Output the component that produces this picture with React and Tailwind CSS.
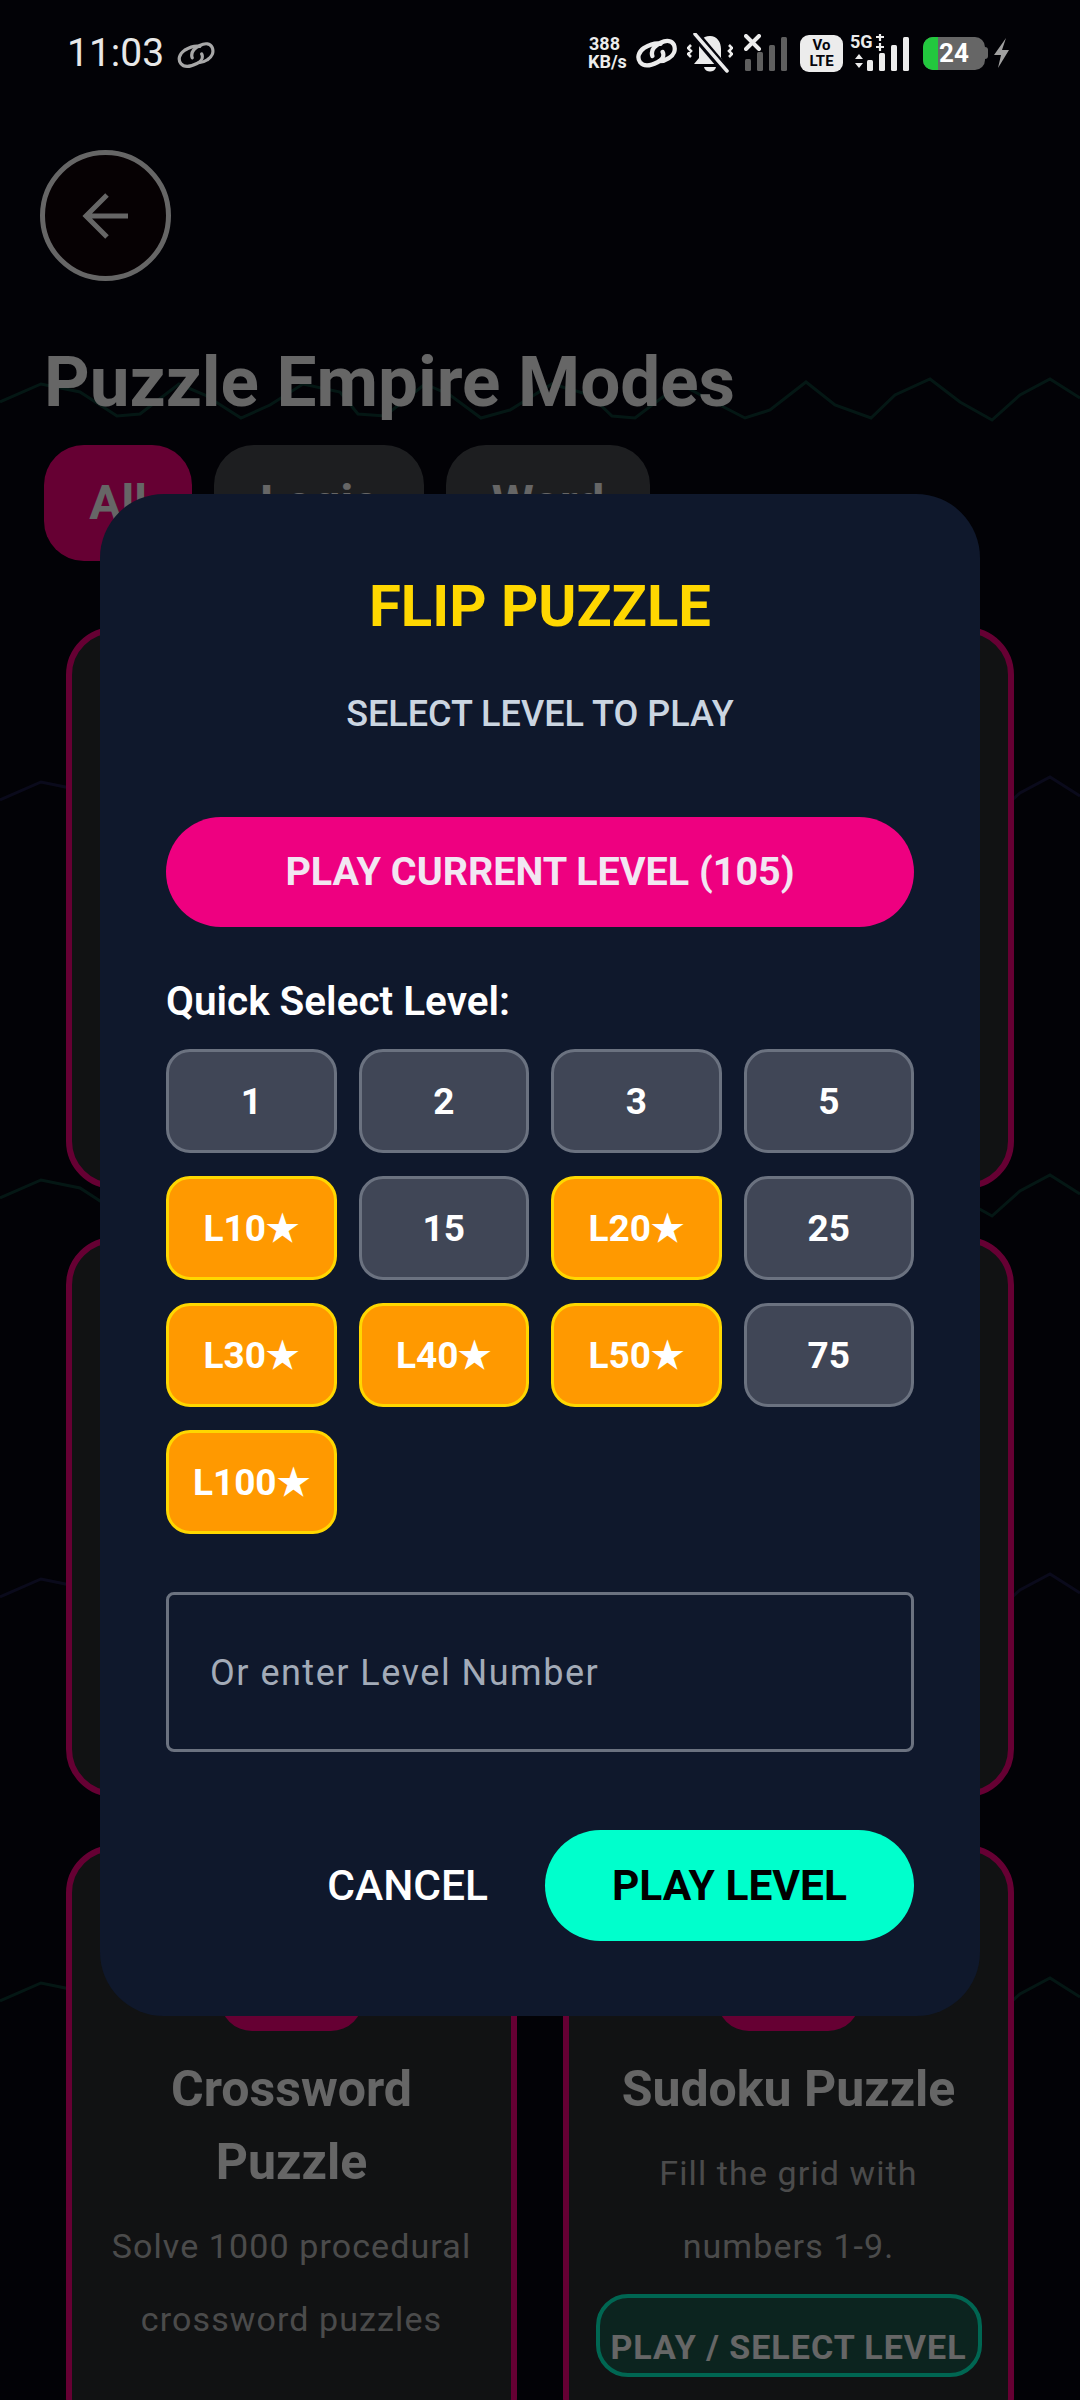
const W = "M0 402 L41 384 L80 392 L117 416 L140 414 L179 384 L205 395 L241 418 L270 405 L303 384 L340 392 L358 414 L385 416 L425 384 L450 395 L481 418 L510 410 L552 384 L590 395 L612 416 L635 418 L680 384 L710 400 L745 418 L770 410 L806 382 L835 405 L871 418 L895 395 L930 379 L960 402 L992 420 L1020 395 L1050 379 L1080 398";

function Waves() {
  const rows = [
    [0, "#0c3a34"],
    [398, "#1a1a44"],
    [796, "#0c3a34"],
    [1195, "#1a1a44"],
    [1599, "#0c3a34"],
  ];
  return (
    <svg className="absolute inset-0" width="1080" height="2400" fill="none">
      {rows.map(([y, c]) => (
        <path key={y} d={W} transform={`translate(0 ${y})`} stroke={c} strokeWidth="3" />
      ))}
    </svg>
  );
}

function LinkIcon({ className, w = 3 }) {
  return (
    <svg className={className} viewBox="0 0 40 30" fill="none" stroke="currentColor" strokeWidth={w} strokeLinecap="round">
      <path d="M24 6 C19 5 13 7 8 10 C2 14 1 20 4 24 C8 29 15 27 21 24 C25 22 28 18 26 14" />
      <path d="M16 18 C14 12 18 8 24 5 C30 2 35 3 37 7 C39 12 37 17 32 20 C29 22 26 23 23 23" />
    </svg>
  );
}

function StatusBar() {
  return (
    <div className="relative z-20 flex h-[106px] items-center pl-[67px] pr-[70px] text-[#ececec]">
      <span className="text-[39px] leading-none text-[#e8e8e8]">11:03</span>
      <LinkIcon className="ml-[13px] mt-[3px] h-[30px] w-[38px] text-[#a8a8a8]" w={3.4} />
      <div className="ml-auto flex items-center">
        <div className="flex w-[48px] flex-col items-start text-[18px] font-bold leading-[18px] text-[#ececec]">
          <span className="pl-[1px]">388</span>
          <span>KB/s</span>
        </div>
        <LinkIcon className="h-[32px] w-[41px]" w={4.2} />
        <svg className="ml-[10px] h-[40px] w-[46px]" viewBox="0 0 46 40" fill="none">
          <path d="M23 3 C15 3 12 9 12 16 L12 25 L7 31 L38 31 L34 25 L34 16 C34 9 30 3 23 3Z" fill="#ececec" />
          <path d="M17 34 H29 C28 40 18 40 17 34Z" fill="#ececec" />
          <path d="M7 0 L39 38" stroke="#05050c" strokeWidth="9" />
          <path d="M8 1 L40 38" stroke="#ececec" strokeWidth="3.5" strokeLinecap="round" />
          <path d="M4 12 L1 15 L4 18 L1 21 L4 24 M42 12 L45 15 L42 18 L45 21 L42 24" stroke="#ececec" strokeWidth="2.6" />
        </svg>
        <svg className="ml-[11px] h-[38px] w-[44px]" viewBox="0 0 44 38" fill="none">
          <path d="M2 2 L15 15 M15 2 L2 15" stroke="#ececec" strokeWidth="4" strokeLinecap="round" />
          <rect x="1" y="25" width="6" height="12" rx="1.5" fill="#5f5f5f" />
          <rect x="13" y="18" width="6" height="19" rx="1.5" fill="#5f5f5f" />
          <rect x="25" y="11" width="6" height="26" rx="1.5" fill="#5f5f5f" />
          <rect x="37" y="3" width="6" height="34" rx="1.5" fill="#5f5f5f" />
        </svg>
        <div className="ml-[12px] flex h-[37px] w-[43px] flex-col items-center justify-center rounded-[9px] bg-[#ececec] text-[15px] font-bold leading-[16px] text-[#05050c]">
          <span>Vo</span>
          <span>LTE</span>
        </div>
        <div className="relative ml-[7px] h-[38px] w-[62px]">
          <span className="absolute left-0 top-[-2px] text-[18px] font-bold leading-[20px]">5G</span>
          <svg className="absolute inset-0" width="62" height="38" viewBox="0 0 62 38" fill="none">
            <path d="M26 3 H34 M30 0 V7 M26 13 H34 M30 9 V17" stroke="#ececec" strokeWidth="2.2" />
            <path d="M5 25 L9 20 L13 25Z M5 29 L9 34 L13 29Z" fill="#ececec" />
            <rect x="17" y="26" width="6" height="11" rx="1.5" fill="#ececec" />
            <rect x="29" y="19" width="6" height="18" rx="1.5" fill="#ececec" />
            <rect x="41" y="11" width="6" height="26" rx="1.5" fill="#ececec" />
            <rect x="53" y="3" width="6" height="34" rx="1.5" fill="#ececec" />
          </svg>
        </div>
        <div className="relative ml-[11px] h-[33px] w-[62px] overflow-hidden rounded-[10px] bg-[#666666]">
          <div className="h-full w-[15px] bg-[#22c83e]" />
          <span className="absolute inset-0 flex items-center justify-center text-[26px] font-bold text-white">24</span>
        </div>
        <div className="h-[12px] w-[3px] rounded-r bg-[#666666]" />
        <svg className="ml-[5px] h-[30px] w-[17px]" viewBox="0 0 17 30">
          <path d="M13 0 L1 17 H8 L5 30 L16 12 H9Z" fill="#a0a0a0" />
        </svg>
      </div>
    </div>
  );
}

function Card({ children, className = "" }) {
  return (
    <div className={`flex flex-col items-center overflow-hidden rounded-[48px] border-[6px] border-[#ff0080] bg-[#2b2e31] ${className}`}>
      {children}
    </div>
  );
}

function Background() {
  return (
    <div className="relative flex flex-col pl-[45px]">
      <div className="mt-[44px] flex h-[131px] w-[131px] items-center justify-center self-start rounded-full border-[5px] border-white bg-[#0f0308] -ml-[5px]">
        <svg className="h-[48px] w-[48px]" viewBox="0 0 48 48" fill="none" stroke="white" strokeWidth="5">
          <path d="M46 24 H4 M25 3 L4 24 L25 45" />
        </svg>
      </div>
      <h1 className="mt-[63px] -ml-[1px] text-[71px] font-bold leading-[76px] text-white">Puzzle Empire Modes</h1>
      <div className="mt-[25px] -ml-[1px] flex gap-[22px] text-[48px] font-bold">
        <div className="flex h-[116px] w-[148px] items-center justify-center rounded-[40px] bg-[#ff0080] text-white">All</div>
        <div className="flex h-[116px] w-[210px] items-center justify-center rounded-[40px] bg-[#4a4d52] text-white">Logic</div>
        <div className="flex h-[116px] w-[204px] items-center justify-center rounded-[40px] bg-[#4a4d52] text-white">Word</div>
      </div>
      <div className="mt-[66px] ml-[21px] grid w-[948px] grid-cols-2 gap-x-[46px] gap-y-[48px]">
        <Card className="h-[562px]" />
        <Card className="h-[562px]" />
        <Card className="h-[560px]" />
        <Card className="h-[560px]" />
        <Card className="h-[600px] pt-[88px]">
          <div className="h-[92px] w-[143px] rounded-[32px] bg-[#ff0080]" />
          <h2 className="mt-[22px] text-center text-[50px] font-bold leading-[73px] text-white">Crossword<br />Puzzle</h2>
          <p className="mt-[11px] text-center text-[34px] leading-[73px] tracking-[1.1px] text-[#bcbcbc]">Solve 1000 procedural<br />crossword puzzles</p>
        </Card>
        <Card className="h-[600px] pt-[88px]">
          <div className="h-[92px] w-[143px] rounded-[32px] bg-[#ff0080]" />
          <h2 className="mt-[22px] text-center text-[50px] font-bold leading-[73px] text-white">Sudoku Puzzle</h2>
          <p className="mt-[11px] text-center text-[34px] leading-[73px] tracking-[1.1px] text-[#bcbcbc]">Fill the grid with<br />numbers 1-9.</p>
          <div className="mt-[11px] flex h-[83px] w-[386px] items-end justify-center rounded-[32px] border-[4px] border-[#00ffcc] bg-[#1f5a4e] pb-[4px] text-[34px] font-bold leading-[44px] tracking-[1px] whitespace-nowrap text-white">PLAY / SELECT LEVEL</div>
        </Card>
      </div>
    </div>
  );
}

function LevelButton({ label, special }) {
  return (
    <button className={`flex h-[104px] items-center justify-center rounded-[24px] border-[3px] pt-[2px] text-[37px] font-bold text-white ${special ? "border-[#ffd700] bg-[#ff9900]" : "border-[#6b7280] bg-[#404656]"}`}>
      {label}
    </button>
  );
}

function Dialog() {
  const levels = [["1"], ["2"], ["3"], ["5"], ["L10★", 1], ["15"], ["L20★", 1], ["25"], ["L30★", 1], ["L40★", 1], ["L50★", 1], ["75"], ["L100★", 1]];
  return (
    <div className="flex h-[1522px] flex-col rounded-[64px] bg-[#0f182c] px-[66px]">
      <h2 className="mt-[75px] text-center text-[58px] font-bold leading-[74px] text-[#ffd700]">FLIP PUZZLE</h2>
      <p className="mt-[50px] text-center text-[36px] font-medium leading-[42px] text-[#cbd5e1]">SELECT LEVEL TO PLAY</p>
      <button className="mt-[82px] flex h-[110px] items-center justify-center rounded-full bg-[#ee0080] text-[39.5px] font-bold text-[#f2e6f2]">PLAY CURRENT LEVEL (105)</button>
      <p className="mt-[52px] text-[40.5px] font-semibold leading-[44px] text-white">Quick Select Level:</p>
      <div className="mt-[26px] grid grid-cols-4 gap-x-[22px] gap-y-[23px]">
        {levels.map(([l, s]) => <LevelButton key={l} label={l} special={s} />)}
      </div>
      <div className="mt-[58px] flex h-[160px] items-center rounded-[8px] border-[3px] border-[#6b7280] pl-[41px] pt-[2px] text-[36px] tracking-[1.5px] text-[#a3abb8]">Or enter Level Number</div>
      <div className="mt-[78px] flex items-center justify-end gap-[57px] text-[42.5px] font-medium">
        <span className="text-white">CANCEL</span>
        <button className="flex h-[111px] w-[369px] items-center justify-center rounded-full bg-[#00ffcc] font-bold text-black">PLAY LEVEL</button>
      </div>
    </div>
  );
}

export default function App() {
  return (
    <div className="relative h-[2400px] w-[1080px] overflow-hidden bg-[#05050f] font-['Roboto',sans-serif]">
      <Waves />
      <StatusBar />
      <Background />
      <div className="absolute inset-0 z-10 bg-black/60 px-[100px] pt-[494px]">
        <Dialog />
      </div>
    </div>
  );
}
